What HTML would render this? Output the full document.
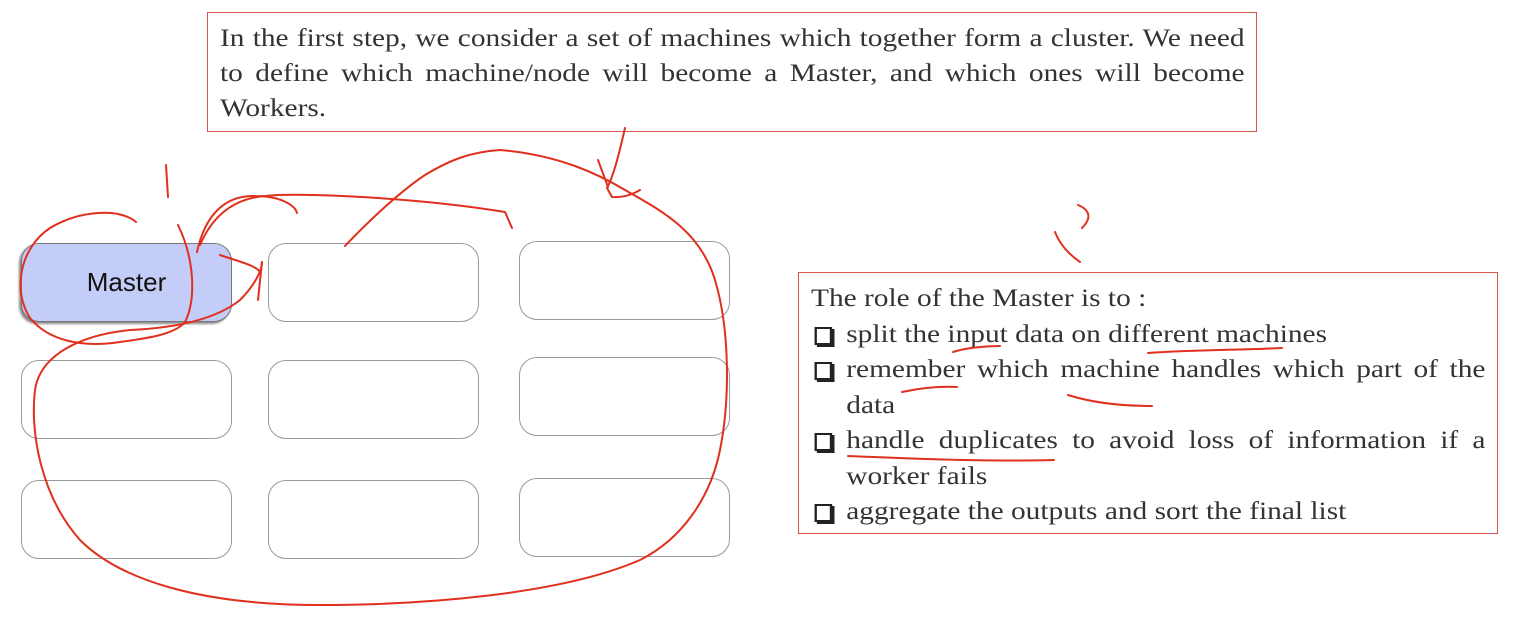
<!DOCTYPE html>
<html><head><meta charset="utf-8"><style>
body{margin:0;width:1528px;height:619px;background:#fff;position:relative;overflow:hidden;font-family:"Liberation Serif",serif;color:#333}
.b{position:absolute;border:1.5px solid #9a9a9a;border-radius:18px;box-sizing:border-box;width:211px;height:79px;background:#fff}
.m{background:#c3cdf7;border-color:#777;font-family:"Liberation Sans",sans-serif;font-size:26px;color:#111;display:flex;align-items:center;justify-content:center;box-shadow:-2px 2px 2px #888}
.top{position:absolute;left:207px;top:12px;width:1050px;height:120px;border:1.3px solid #d9564c;box-sizing:border-box}
.top .t{position:absolute;left:12px;top:8px;width:872px;transform:scaleX(1.175);transform-origin:0 0;font-size:25px;line-height:35px;text-align:justify}
.rt{position:absolute;left:798px;top:272px;width:700px;height:262px;border:1.3px solid #d9564c;box-sizing:border-box}
.rt .t{position:absolute;left:12px;top:8px;width:574px;transform:scaleX(1.175);transform-origin:0 0;font-size:25px;line-height:35.5px}
.li{position:relative;padding-left:30px;text-align:justify}
.cb{position:absolute;left:3px;top:10px;width:11px;height:14px;border:2px solid #222;box-shadow:2px 2px 0 #222}
</style></head><body>
<div class="top"><div class="t">In the first step, we consider a set of machines which together form a cluster. We need to define which machine/node will become a Master, and which ones will become Workers.</div></div>
<div class="b m" style="left:21px;top:243px">Master</div>
<div class="b" style="left:268px;top:243px"></div>
<div class="b" style="left:519px;top:241px"></div>
<div class="b" style="left:21px;top:360px"></div>
<div class="b" style="left:268px;top:360px"></div>
<div class="b" style="left:519px;top:357px"></div>
<div class="b" style="left:21px;top:480px"></div>
<div class="b" style="left:268px;top:480px"></div>
<div class="b" style="left:519px;top:478px"></div>
<div class="rt"><div class="t">
<div>The role of the Master is to :</div>
<div class="li"><span class="cb"></span>split the input data on different machines</div>
<div class="li"><span class="cb"></span>remember which machine handles which part of the data</div>
<div class="li"><span class="cb"></span>handle duplicates to avoid loss of information if a worker fails</div>
<div class="li"><span class="cb"></span>aggregate the outputs and sort the final list</div>
</div></div>
<svg width="1528" height="619" style="position:absolute;left:0;top:0" fill="none" stroke="#e0301e" stroke-width="2" stroke-linecap="round">
<path d="M136 222 C120 208 80 210 50 228 C20 248 12 290 30 318 C48 340 80 348 120 342 C150 338 175 334 185 322 C196 300 195 260 178 225"/>
<path d="M166 165 L168 197"/>
<path d="M197 252 C205 215 225 195 255 196 C280 196 295 205 297 213"/>
<path d="M200 245 C215 210 240 198 265 196 C300 192 420 198 505 212 L512 228"/>
<path d="M220 255 C240 262 255 265 260 272"/>
<path d="M262 262 L258 300"/>
<path d="M345 246 C360 230 395 195 425 175 C450 160 470 152 500 150 C560 155 600 175 625 190 C660 210 700 230 715 280 C730 330 730 400 720 450 C710 500 680 540 640 560 C560 595 420 605 320 605 C200 605 120 580 80 540 C40 495 30 430 35 390 C40 355 80 335 130 330 C175 328 215 320 240 300 C255 285 262 270 262 262"/>
<path d="M625 128 C620 150 614 175 607 188 L612 197 C625 198 635 193 640 190"/>
<path d="M598 160 L608 187"/>
<path d="M1055 232 C1060 245 1070 255 1080 262"/>
<path d="M1078 205 C1090 210 1092 218 1082 228"/>
<path d="M953 352 C965 348 985 346 1000 346"/>
<path d="M1148 353 C1190 350 1240 350 1282 348"/>
<path d="M902 392 C920 388 940 386 957 387"/>
<path d="M1068 395 C1090 402 1120 406 1152 406"/>
<path d="M848 456 C900 458 980 462 1054 460"/>
</svg>
</body></html>
